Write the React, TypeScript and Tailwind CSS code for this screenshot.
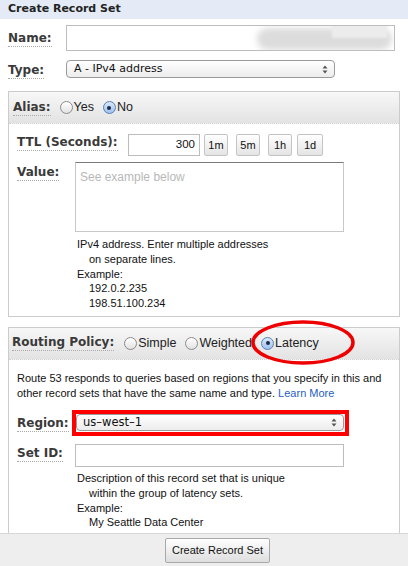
import React from 'react';

const sans = { fontFamily: '"Liberation Sans", Arial, sans-serif' };

function Label({ children }: { children: React.ReactNode }) {
  return (
    <span className="block font-bold text-[12px] text-[#3a3a3a] border-b border-dotted border-[#aaa] leading-[15px] whitespace-nowrap [font-family:'DejaVu_Sans',Verdana,sans-serif]">
      {children}
    </span>
  );
}

function Radio({ checked, label }: { checked?: boolean; label: string }) {
  return (
    <span className="inline-flex items-center text-[12.5px] text-[#222]">
      <span
        className={`w-[13px] h-[13px] rounded-full border flex items-center justify-center ${
          checked
            ? 'border-[#5a7fb5] bg-gradient-to-b from-[#d8e8fa] to-[#9ec3ef]'
            : 'border-[#8a8a8a] bg-gradient-to-b from-white to-[#e2e2e2]'
        }`}
      >
        {checked && <span className="w-[4px] h-[4px] rounded-full bg-[#1c2a44]" />}
      </span>
      <span className="ml-[1px]">{label}</span>
    </span>
  );
}

function SelectArrows() {
  return (
    <svg width="6" height="9" viewBox="0 0 6 9">
      <path d="M0.5 3.5 L3 0.5 L5.5 3.5 Z" fill="#555" />
      <path d="M0.5 5.5 L3 8.5 L5.5 5.5 Z" fill="#555" />
    </svg>
  );
}

function PanelHeader({ children }: { children: React.ReactNode }) {
  return (
    <div className="relative h-[32px] flex items-center bg-gradient-to-b from-[#f7f7f7] to-[#e3e3e3] border-b border-dotted border-[#d0d0d0]">
      {children}
    </div>
  );
}

export default function App() {
  return (
    <div className="w-[408px] h-[566px] bg-white flex flex-col overflow-hidden" style={sans}>
      <div className="flex-1 overflow-hidden">
        {/* title */}
        <div className="h-[19px] bg-[#e4ebf6] pl-2 flex items-center text-[11px] font-bold text-[#222] [font-family:'DejaVu_Sans',Verdana,sans-serif]">
          Create Record Set
        </div>

        {/* name */}
        <div className="flex items-start mt-[6px] pl-2">
          <div className="w-[58px] flex mt-[6px]"><Label>Name:</Label></div>
          <div className="relative w-[329px] h-[26px] border border-[#bdbdbd] overflow-hidden">
            <div className="absolute left-[190px] top-[2px] w-[135px] h-[22px] rounded-full bg-[#dcdcdc] blur-[3px]" />
            <div className="absolute left-[265px] top-[-2px] w-[55px] h-[14px] bg-[#ececec] blur-[1px]" />
          </div>
        </div>

        {/* type */}
        <div className="flex items-start mt-[9px] pl-2">
          <div className="w-[58px] flex mt-[3px]"><Label>Type:</Label></div>
          <div className="w-[269px] h-[18px] rounded-[4px] border border-[#9a9a9a] bg-gradient-to-b from-white to-[#ececec] flex items-center justify-between pl-[7px] pr-[6px] text-[11px] text-[#111] [font-family:'DejaVu_Sans',Verdana,sans-serif]">
            <span>A - IPv4 address</span>
            <SelectArrows />
          </div>
        </div>

        {/* alias panel */}
        <div className="mx-2 mt-[12px] border border-[#cccccc]">
          <PanelHeader>
            <div className="pl-[4px] flex items-center gap-[9px]">
              <Label>Alias:</Label>
              <div className="flex items-center gap-[9px]">
                <Radio label="Yes" />
                <Radio checked label="No" />
              </div>
            </div>
          </PanelHeader>
          <div className="pl-[8px] pt-[10px] pb-[5px]">
            <div className="flex items-start">
              <div className="w-[111px] flex mt-[1px]"><Label>TTL (Seconds):</Label></div>
              <div className="w-[72px] h-[22px] border border-[#bdbdbd] flex items-center justify-end pr-[4px] text-[11.5px] text-[#111]">
                300
              </div>
              {['1m', '5m', '1h', '1d'].map((t, i) => (
                <div
                  key={t}
                  className={`h-[22px] border border-[#c4c4c4] rounded-[2px] bg-gradient-to-b from-white to-[#e4e4e4] flex items-center justify-center text-[11px] text-[#111] ${
                    i === 0 ? 'ml-[4px] w-[24px]' : i === 3 ? 'ml-[5px] w-[26px]' : 'ml-[8px] w-[24px]'
                  }`}
                >
                  {t}
                </div>
              ))}
            </div>
            <div className="flex items-start mt-[6px]">
              <div className="w-[58px] flex mt-[3px]"><Label>Value:</Label></div>
              <div className="w-[269px] h-[70px] border border-[#c8c8c8] border-t-[#7a7a7a] pl-[4px] pt-[5px] text-[12px] text-[#b8b8b8]">
                See example below
              </div>
            </div>
            <div className="ml-[60px] mt-[5px] text-[11px] leading-[14.8px] text-[#111]">
              <div>IPv4 address. Enter multiple addresses</div>
              <div className="pl-[12px]">on separate lines.</div>
              <div>Example:</div>
              <div className="pl-[12px]">192.0.2.235</div>
              <div className="pl-[12px]">198.51.100.234</div>
            </div>
          </div>
        </div>

        {/* routing panel */}
        <div className="mx-2 mt-[10px] border border-[#cccccc] border-b-0 h-[300px]">
          <PanelHeader>
            <div className="pl-[3px] flex items-center gap-[10px]">
              <Label>Routing Policy:</Label>
              <div className="flex items-center gap-[9px]">
                <Radio label="Simple" />
                <Radio label="Weighted" />
                <Radio checked label="Latency" />
              </div>
            </div>
            <svg className="absolute left-[241px] top-[-9px]" width="106" height="47" viewBox="0 0 106 47">
              <ellipse cx="53" cy="23.5" rx="50" ry="20.5" fill="none" stroke="#ee0000" strokeWidth="3.5" />
            </svg>
          </PanelHeader>
          <div className="pl-[8px] pt-[11px]">
            <div className="text-[11px] leading-[15px] text-[#111] w-[370px]">
              Route 53 responds to queries based on regions that you specify in this and other record sets that have
              the same name and type. <span className="text-[#1f5fbf]">Learn More</span>
            </div>
            <div className="flex items-start mt-[9px]">
              <div className="w-[55px] flex mt-[6px]"><Label>Region:</Label></div>
              <div className="border-[4px] border-[#ff0000] w-[277px] h-[26px] flex items-center">
                <div className="w-[268px] h-[17px] rounded-[4px] border border-[#9a9a9a] bg-gradient-to-b from-white to-[#ececec] flex items-center justify-between pl-[6px] pr-[6px] text-[11.5px] text-[#111] [font-family:'DejaVu_Sans',Verdana,sans-serif]">
                  <span>us–west–1</span>
                  <SelectArrows />
                </div>
              </div>
            </div>
            <div className="flex items-start mt-[8px]">
              <div className="w-[58px] flex mt-[2px]"><Label>Set ID:</Label></div>
              <div className="w-[269px] h-[23px] border border-[#bdbdbd]" />
            </div>
            <div className="ml-[60px] mt-[4px] text-[11px] leading-[14.8px] text-[#111]">
              <div>Description of this record set that is unique</div>
              <div className="pl-[12px]">within the group of latency sets.</div>
              <div>Example:</div>
              <div className="pl-[12px]">My Seattle Data Center</div>
            </div>
          </div>
        </div>
      </div>

      {/* footer */}
      <div className="h-[33px] shrink-0 bg-[#eeeeee] border-t border-[#d8d8d8] flex items-center">
        <div className="ml-[165px] w-[105px] h-[25px] border border-[#a8a8a8] rounded-[2px] bg-gradient-to-b from-white to-[#dedede] flex items-center justify-center text-[11px] text-[#111] whitespace-nowrap">
          Create Record Set
        </div>
      </div>
    </div>
  );
}
